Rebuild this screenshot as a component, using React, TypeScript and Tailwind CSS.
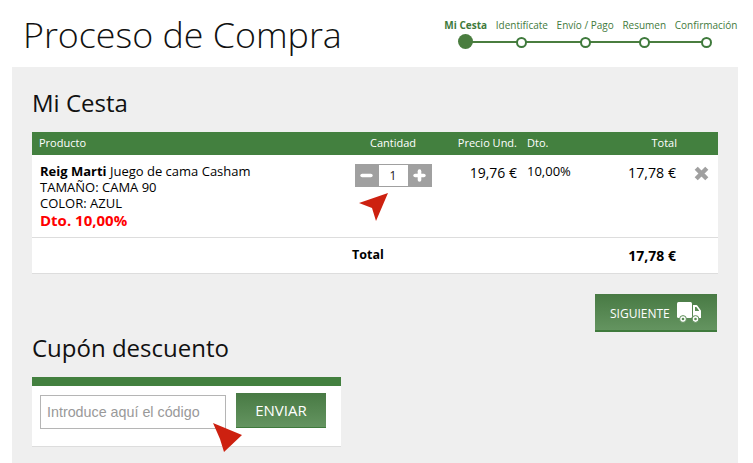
import { Minus, Plus } from "lucide-react";

const steps = ["Mi Cesta", "Identifícate", "Envío / Pago", "Resumen", "Confirmación"];

function Arrow({ className, points }: { className: string; points: string }) {
  return (
    <svg className={className} width="30" height="30" viewBox="0 0 30 30">
      <polygon points={points} fill="#cd2110" />
    </svg>
  );
}

function TruckIcon() {
  return (
    <svg width="24" height="21" viewBox="0 0 24 21">
      <rect x="0" y="0" width="15" height="16" rx="1.5" fill="white" />
      <path d="M16 3h3.5a1 1 0 0 1 .8.4L23.6 8a1.5 1.5 0 0 1 .4 1v7h-8z" fill="white" />
      <path d="M18 5h1.4l2.6 3.6V9h-4z" fill="#5b8c56" />
      <circle cx="6" cy="17" r="3.4" fill="white" stroke="#5b8c56" strokeWidth="1" />
      <circle cx="6" cy="17" r="1.3" fill="#5b8c56" />
      <circle cx="18.5" cy="17" r="3.4" fill="white" stroke="#5b8c56" strokeWidth="1" />
      <circle cx="18.5" cy="17" r="1.3" fill="#5b8c56" />
    </svg>
  );
}

function Stepper() {
  return (
    <div className="relative ml-auto mr-[15.5px] mt-[19px] flex gap-[8.7px] self-start">
      <div className="absolute left-[20px] right-[31px] top-[22px] h-[2px] bg-[#4a7d3f]" />
      {steps.map((s, i) => (
        <div key={s} className="relative flex flex-col items-center">
          <span className={`text-[10px] leading-[13px] text-[#3f7a3c] ${i === 0 ? "font-bold" : ""}`}>{s}</span>
          {i === 0 ? (
            <span className="mt-[2px] h-[15px] w-[15px] rounded-full bg-[#4a7d3f]" />
          ) : (
            <span className="mt-[5px] h-[11px] w-[11px] rounded-full border-2 border-[#3f7a3c] bg-white" />
          )}
        </div>
      ))}
    </div>
  );
}

const cols = "grid grid-cols-[300px_122px_68px_78px_82px_36px]";

export default function App() {
  return (
    <div className="h-[463px] w-[753px] overflow-hidden bg-white font-['Open_Sans',sans-serif] text-black">
      <header className="flex h-[67px]">
        <h1 className="ml-[23px] mt-[9px] whitespace-nowrap text-[35.8px] font-light leading-[50px] text-[#111]">Proceso de Compra</h1>
        <Stepper />
      </header>
      <main className="relative mx-[12px] h-[396px] w-[726px] bg-[#efefef] px-[20px] pt-[21px]">
        <h2 className="text-[24px] leading-[30px] text-[#111]">Mi Cesta</h2>
        <section className="mt-[14px] bg-white text-[14px] shadow-[0_1px_0_#dddddd]">
          <div className={`${cols} h-[23px] items-center bg-[#43803f] text-[11px] text-white`}>
            <span className="pl-[7px]">Producto</span>
            <span className="text-center">Cantidad</span>
            <span className="whitespace-nowrap pr-[5px] text-right">Precio Und.</span>
            <span className="pl-[5px]">Dto.</span>
            <span className="pr-[5px] text-right">Total</span>
            <span />
          </div>
          <div className={`${cols} h-[83px] border-b border-[#dddddd]`}>
            <div className="pl-[8px] pt-[8px] text-[13px] leading-[16px]">
              <div><b>Reig Marti</b> Juego de cama Casham</div>
              <div>TAMAÑO: CAMA 90</div>
              <div>COLOR: AZUL</div>
              <div className="text-[15px] font-bold leading-[18px] text-[#ff0000]">Dto. 10,00%</div>
            </div>
            <div className="pt-[9px]">
              <div className="mx-auto flex h-[23px] w-[77px] items-center bg-[#a0a0a0] text-white">
                <span className="flex w-[24px] justify-center"><Minus size={15} strokeWidth={3.6} absoluteStrokeWidth /></span>
                <span className="flex h-[21px] w-[29px] items-center justify-center bg-white text-[12px] text-[#222]">1</span>
                <span className="flex w-[24px] justify-center"><Plus size={15} strokeWidth={3.6} absoluteStrokeWidth /></span>
              </div>
            </div>
            <div className="pr-[5px] pt-[8px] text-right leading-[19px]">19,76 €</div>
            <div className="pl-[5px] pt-[7px] text-[13px] leading-[19px]">10,00%</div>
            <div className="pr-[6px] pt-[8px] text-right text-[14.2px] leading-[19px]">17,78 €</div>
            <div className="pl-[13px] pt-[11px]">
              <svg className="-translate-x-[1px]" width="15" height="15" viewBox="0 0 15 15">
                <path d="M2.2 2.2 12.8 12.8M12.8 2.2 2.2 12.8" stroke="#a0a0a0" strokeWidth="4.4" fill="none" />
              </svg>
            </div>
          </div>
          <div className={`${cols} h-[35px] items-center font-bold`}>
            <span />
            <span className="pl-[20px] text-[12.5px]">Total</span>
            <span />
            <span />
            <span className="pr-[6px] text-right">17,78 €</span>
            <span />
          </div>
        </section>
        <div className="mt-[21px] flex justify-end pr-[1px]">
          <button className="flex h-[38px] w-[122px] items-center gap-[7px] border-b-2 border-[#3f7a3c] bg-gradient-to-b from-[#487a44] to-[#649460] pl-[15px] pt-[1px] text-[12px] text-white">
            <span className="relative top-[1px]">SIGUIENTE</span>
            <TruckIcon />
          </button>
        </div>
        <h2 className="mt-[1px] text-[24px] leading-[30px] text-[#111]">Cupón descuento</h2>
        <section className="mt-[14px] w-[309px] border-b border-[#dddddd] bg-white">
          <div className="h-[9px] bg-[#43803f]" />
          <div className="flex h-[60px] gap-[10px] pl-[8px] pt-[7px]">
            <input
              readOnly
              placeholder="Introduce aquí el código"
              className="mt-[2px] h-[34px] w-[186px] border border-[#b5b5b5] px-[6px] font-['Liberation_Sans',sans-serif] text-[14.3px] placeholder:text-[#999999]"
            />
            <button className="h-[35px] w-[90px] border-b border-[#3f7a3c] bg-gradient-to-b from-[#487a44] to-[#649460] text-[15px] text-white">
              ENVIAR
            </button>
          </div>
        </section>
        <Arrow className="absolute left-[347px] top-[126px]" points="0,10 29,0 17,28 13,15" />
        <Arrow className="absolute left-[201px] top-[356px]" points="0,0 29,12 11,29 7,16" />
      </main>
    </div>
  );
}
